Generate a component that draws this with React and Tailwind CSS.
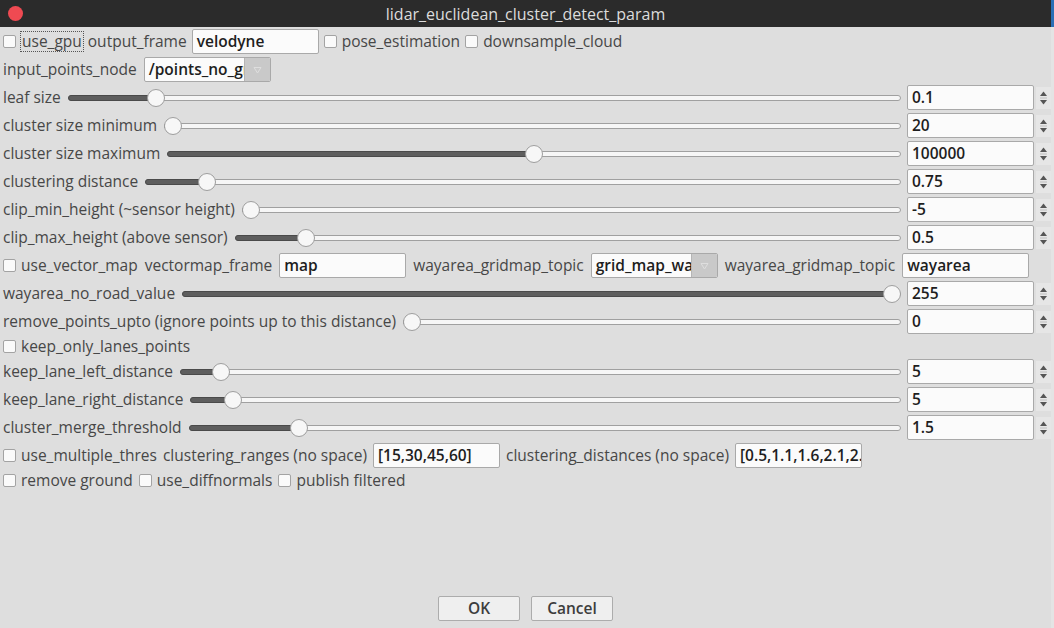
import React from "react";

const FONT = { fontFamily: '"Open Sans", "Noto Sans", sans-serif' };

function Check() {
  return <span className="inline-block w-[13px] h-[13px] shrink-0 rounded-[2px] border border-[#a3a3a3] bg-[#fafafa]" />;
}

function CheckLabel({ label, focus }) {
  return (
    <div className="flex items-center gap-[5px] shrink-0">
      <Check />
      <span className={focus ? "outline outline-1 outline-dotted outline-[#555] px-[1px] leading-[19px]" : "leading-[19px]"}>{label}</span>
    </div>
  );
}

function TextBox({ value, w = "w-[127px]" }) {
  return (
    <div className={`${w} h-[25px] shrink-0 rounded-[2px] border border-[#a9a9a9] bg-[#fbfbfb] flex items-center pl-[4px] overflow-hidden whitespace-nowrap text-[#1e1e1e] text-[15.5px] font-semibold`}>
      {value}
    </div>
  );
}

function Combo({ value }) {
  return (
    <div className="w-[127px] h-[25px] shrink-0 rounded-[2px] border border-[#a9a9a9] bg-[#fbfbfb] flex overflow-hidden">
      <div className="flex-1 flex items-center pl-[4px] overflow-hidden whitespace-nowrap text-[#1e1e1e] text-[15.5px] font-semibold">{value}</div>
      <div className="w-[26px] bg-[#c9c9c9] border-l border-[#b5b5b5] flex items-center justify-center">
        <svg width="9" height="8" viewBox="0 0 9 8">
          <path d="M1 1.5 L8 1.5 L4.5 7 Z" fill="none" stroke="#dedede" strokeWidth="1" />
        </svg>
      </div>
    </div>
  );
}

function Spin({ value }) {
  return (
    <div className="flex items-center shrink-0">
      <div className="w-[127px] h-[25px] rounded-[2px] border border-[#a9a9a9] bg-[#fbfbfb] flex items-center pl-[4px] text-[#1e1e1e] text-[15.5px] font-semibold">
        {value}
      </div>
      <div className="ml-[2px] w-[15px] h-[22px] bg-[#e6e6e6] flex items-center justify-center">
        <svg width="9" height="16" viewBox="0 0 9 16">
          <path d="M1 6 L4.5 1.5 L8 6 Z" fill="#555" />
          <path d="M1 10 L8 10 L4.5 14.5 Z" fill="#555" />
          <rect x="1" y="7.5" width="7" height="1" fill="#bdbdbd" />
        </svg>
      </div>
    </div>
  );
}

function Slider({ frac }) {
  return (
    <div className="relative flex-1 h-[20px] ml-[7px] mr-[6px]">
      <div className="absolute left-0 right-0 top-[7px] h-[6px] rounded-full border border-[#a0a0a0] bg-[#f6f6f6]" />
      <div
        className="absolute left-0 top-[7px] h-[6px] rounded-full border border-[#4a4a4a] bg-[#5e5e5e]"
        style={{ width: `calc(${frac} * (100% - 17px) + 9px)` }}
      />
      <div
        className="absolute top-[1px] w-[18px] h-[18px] rounded-full border border-[#9e9e9e] bg-[#f7f7f7]"
        style={{ left: `calc(${frac} * (100% - 18px))` }}
      />
    </div>
  );
}

function SliderRow({ label, frac, value }) {
  return (
    <div className="flex items-center h-[25px]">
      <span className="whitespace-nowrap shrink-0">{label}</span>
      <Slider frac={frac} />
      <Spin value={value} />
    </div>
  );
}

export default function App() {
  return (
    <div className="w-[1054px] h-[628px] flex overflow-hidden text-[15.5px] text-[#474747]" style={FONT}>
      <div className="w-[1051px] h-full flex flex-col bg-[#dedede]">
        <div className="h-[27px] shrink-0 bg-[#2b2b2b] relative flex items-center justify-center">
          <span className="absolute left-[8px] top-[6px] w-[15px] h-[15px] rounded-full bg-[#ef4a52]" />
          <span className="text-[#dcdcdc] text-[16px] font-medium">lidar_euclidean_cluster_detect_param</span>
        </div>
        <div className="flex-1 flex flex-col pl-[3px] pt-[2px] pb-[7px]">
          <div className="flex flex-col gap-[3px]">
            <div className="flex items-center gap-[5px] h-[25px]">
              <CheckLabel label="use_gpu" focus />
              <span>output_frame</span>
              <TextBox value="velodyne" />
              <CheckLabel label="pose_estimation" />
              <CheckLabel label="downsample_cloud" />
            </div>
            <div className="flex items-center gap-[7px] h-[25px]">
              <span>input_points_node</span>
              <Combo value="/points_no_ground" />
            </div>
            <SliderRow label="leaf size" frac={0.097} value="0.1" />
            <SliderRow label="cluster size minimum" frac={0} value="20" />
            <SliderRow label="cluster size maximum" frac={0.5} value="100000" />
            <SliderRow label="clustering distance" frac={0.072} value="0.75" />
            <SliderRow label="clip_min_height (~sensor height)" frac={0} value="-5" />
            <SliderRow label="clip_max_height (above sensor)" frac={0.096} value="0.5" />
            <div className="flex items-center gap-[7px] h-[25px]">
              <CheckLabel label="use_vector_map" />
              <span>vectormap_frame</span>
              <TextBox value="map" />
              <span>wayarea_gridmap_topic</span>
              <Combo value="grid_map_wayarea" />
              <span>wayarea_gridmap_topic</span>
              <TextBox value="wayarea" />
            </div>
            <SliderRow label="wayarea_no_road_value" frac={1} value="255" />
            <SliderRow label="remove_points_upto (ignore points up to this distance)" frac={0} value="0" />
            <div className="flex items-center h-[19px]">
              <CheckLabel label="keep_only_lanes_points" />
            </div>
            <SliderRow label="keep_lane_left_distance" frac={0.046} value="5" />
            <SliderRow label="keep_lane_right_distance" frac={0.048} value="5" />
            <SliderRow label="cluster_merge_threshold" frac={0.146} value="1.5" />
            <div className="flex items-center gap-[6px] h-[25px]">
              <CheckLabel label="use_multiple_thres" />
              <span>clustering_ranges (no space)</span>
              <TextBox value="[15,30,45,60]" />
              <span>clustering_distances (no space)</span>
              <TextBox value="[0.5,1.1,1.6,2.1,2.6]" />
            </div>
            <div className="flex items-center gap-[6px] h-[19px]">
              <CheckLabel label="remove ground" />
              <CheckLabel label="use_diffnormals" />
              <CheckLabel label="publish filtered" />
            </div>
          </div>
          <div className="flex-1" />
          <div className="flex justify-center gap-[11px] pr-[3px]">
            <button className="w-[82px] h-[25px] rounded-[2px] border border-[#acacac] bg-[#efefef] font-semibold text-[#3d3d3d]">OK</button>
            <button className="w-[82px] h-[25px] rounded-[2px] border border-[#acacac] bg-[#efefef] font-semibold text-[#3d3d3d]">Cancel</button>
          </div>
        </div>
      </div>
      <div className="flex-1 flex flex-col bg-[#e4e4e4]">
        <div className="h-[27px] bg-[#2a6fb5]" />
      </div>
    </div>
  );
}
